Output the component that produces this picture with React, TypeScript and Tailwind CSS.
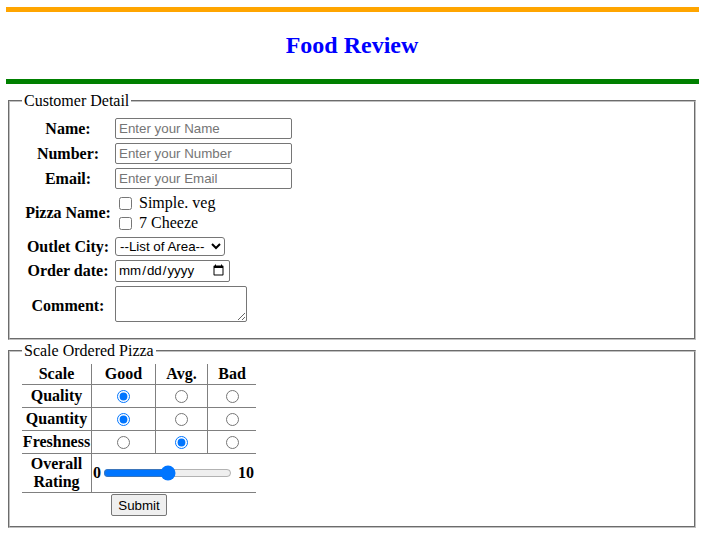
import React from 'react';

const scaleRows = [
  { name: 'Quality', picked: 0 },
  { name: 'Quantity', picked: 0 },
  { name: 'Freshness', picked: 1 },
];

const field =
  "block border border-[#767676] rounded-[2px] bg-white text-[13.33px] font-['Liberation_Sans',Arial,sans-serif] text-black";

const App: React.FC = () => {
  return (
    <div className="min-h-[540px] bg-white font-['Liberation_Serif','Times_New_Roman',serif] text-[16px] leading-[normal] text-black">
      {/* header bars */}
      <div className="h-[7px]" />
      <div className="h-[5px] bg-[#ffa500] ml-[6px] mr-[5px]" />
      <h2 className="text-center text-[24px] leading-[27px] font-bold text-[#0000ff] my-[20px]">Food Review</h2>
      <div className="h-[5px] bg-[#008000] ml-[6px] mr-[5px]" />

      <form className="mx-[8px] mt-[8px]">
        {/* Customer details */}
        <fieldset className="border-2 [border-style:groove] border-[#c0c0c0] px-3 pt-[5px] pb-[10px]">
          <legend className="px-[2px] leading-[18px]">Customer Detail</legend>
          <div className="grid grid-cols-[88px_auto] gap-[2px] p-[2px] w-fit">
            <div className="p-[1px] font-bold text-center self-center">Name:</div>
            <div className="p-[1px]">
              <input type="text" placeholder="Enter your Name" className={`${field} w-[177px] h-[21px] px-[3px] placeholder:text-[#757575]`} />
            </div>
            <div className="p-[1px] font-bold text-center self-center">Number:</div>
            <div className="p-[1px]">
              <input type="text" placeholder="Enter your Number" className={`${field} w-[177px] h-[21px] px-[3px] placeholder:text-[#757575]`} />
            </div>
            <div className="p-[1px] font-bold text-center self-center">Email:</div>
            <div className="p-[1px]">
              <input type="text" placeholder="Enter your Email" className={`${field} w-[177px] h-[21px] px-[3px] placeholder:text-[#757575]`} />
            </div>

            <div className="p-[1px] font-bold text-center self-center">Pizza Name:</div>
            <div className="p-[1px] leading-[20px]">
              <label className="flex items-center">
                <input type="checkbox" className="m-[3px_3px_3px_4px] w-[13px] h-[13px]" />
                <span className="ml-[4px]">Simple. veg</span>
              </label>
              <label className="flex items-center">
                <input type="checkbox" className="m-[3px_3px_3px_4px] w-[13px] h-[13px]" />
                <span className="ml-[4px]">7 Cheeze</span>
              </label>
            </div>

            <div className="p-[1px] font-bold text-center self-center">Outlet City:</div>
            <div className="p-[1px]">
              <select className={`${field} w-[110px] h-[19px] rounded-[3px]`} defaultValue="">
                <option value="">--List of Area--</option>
                <option>North</option>
                <option>South</option>
              </select>
            </div>

            <div className="p-[1px] font-bold text-center self-center">Order date:</div>
            <div className="p-[1px]">
              <input type="date" className={`${field} w-[115px] h-[22px] px-[2px]`} />
            </div>

            <div className="p-[1px] font-bold text-center self-center">Comment:</div>
            <div className="p-[1px] pb-[4px]">
              <textarea className={`${field} w-[132px] h-[36px] px-[2px]`} />
            </div>
          </div>
        </fieldset>

        {/* Scale table */}
        <fieldset className="mt-[2px] border-2 [border-style:groove] border-[#c0c0c0] px-3 pt-[4px] pb-[10px]">
          <legend className="px-[2px] leading-[18px]">Scale Ordered Pizza</legend>
          <div className="w-[234px] font-bold">
            <div className="grid grid-cols-[70px_64px_52px_48px] h-[21px] border-b border-[#808080] text-center leading-[20px]">
              <div className="border-r border-[#808080]">Scale</div>
              <div className="border-r border-[#808080]">Good</div>
              <div className="border-r border-[#808080]">Avg.</div>
              <div>Bad</div>
            </div>
            {scaleRows.map((row) => (
              <div key={row.name} className="grid grid-cols-[70px_64px_52px_48px] h-[23px] border-b border-[#808080] text-center">
                <div className="border-r border-[#808080] flex items-center justify-center">{row.name}</div>
                {[0, 1, 2].map((i) => (
                  <div key={i} className={`${i < 2 ? 'border-r border-[#808080]' : ''} flex items-center justify-center`}>
                    <input type="radio" name={row.name} defaultChecked={row.picked === i} className="w-[13px] h-[13px]" />
                  </div>
                ))}
              </div>
            ))}
            <div className="grid grid-cols-[70px_164px] h-[39px] border-b border-[#808080]">
              <div className="border-r border-[#808080] flex items-center justify-center text-center leading-[18px]">
                Overall<br />Rating
              </div>
              <div className="flex items-center px-[1px]">
                <span>0</span>
                <input type="range" min={0} max={10} defaultValue={5} className="mx-[2px] w-[129px]" />
                <span className="ml-[4px]">10</span>
              </div>
            </div>
            <div className="flex justify-center pt-[1px]">
              <button type="button" className="h-[22px] px-[6px] border border-[#767676] rounded-[2px] bg-[#efefef] text-[13.33px] font-normal font-['Liberation_Sans',Arial,sans-serif]">
                Submit
              </button>
            </div>
          </div>
        </fieldset>
      </form>
    </div>
  );
};

export default App;
